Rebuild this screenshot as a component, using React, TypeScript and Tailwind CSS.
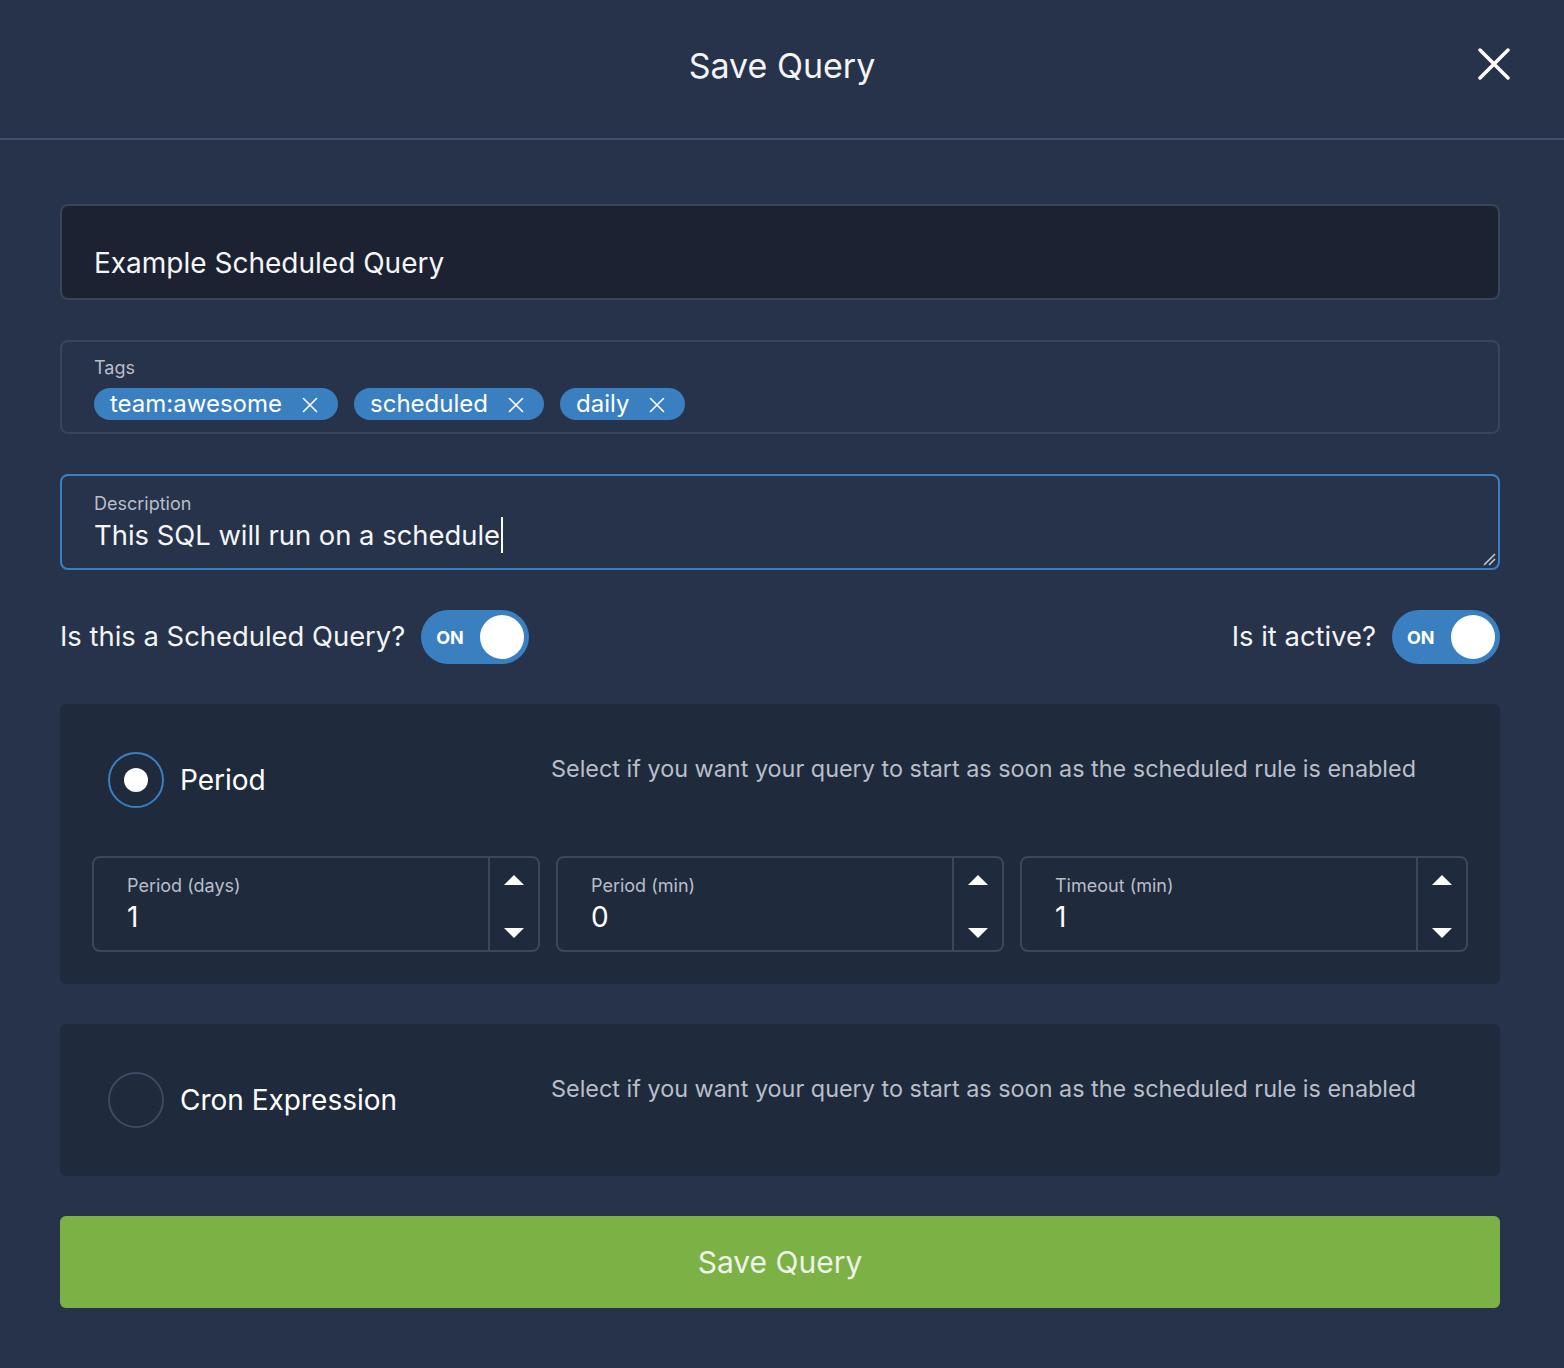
import { X } from 'lucide-react'

const font = { fontFamily: 'Inter, "Noto Sans", sans-serif' }

function Toggle() {
  return (
    <div className="flex h-[54px] w-[108px] items-center justify-between rounded-full bg-[#3a80c1] pl-[15px] pr-[5px]">
      <span className="text-[18px] font-bold text-white">ON</span>
      <span className="h-[44px] w-[44px] rounded-full bg-white" />
    </div>
  )
}

function Radio({ checked }: { checked?: boolean }) {
  return (
    <span
      className={
        checked
          ? 'grid h-[56px] w-[56px] place-items-center rounded-full border-2 border-[#3a80c1]'
          : 'grid h-[56px] w-[56px] place-items-center rounded-full border-2 border-[#3d4a61]'
      }
    >
      {checked && <span className="h-[24px] w-[24px] rounded-full bg-white" />}
    </span>
  )
}

function NumberField({ label, value }: { label: string; value: string }) {
  return (
    <div className="flex h-[96px] rounded-lg border-2 border-[#3b475e]">
      <div className="flex-1 px-[33px] pt-[16px]">
        <div className="text-[18px] leading-[24px] text-[#b9bec8]">{label}</div>
        <div className="mt-[2px] text-[28px] leading-[34px] text-white">{value}</div>
      </div>
      <div className="flex w-[50px] flex-col items-center justify-between border-l-2 border-[#3b475e] pb-[12px] pt-[17px]">
        <svg width="20" height="10" viewBox="0 0 20 10">
          <path d="M0 10 L10 0 L20 10 Z" fill="#fff" />
        </svg>
        <svg width="20" height="10" viewBox="0 0 20 10">
          <path d="M0 0 L10 10 L20 0 Z" fill="#fff" />
        </svg>
      </div>
    </div>
  )
}

function Tag({ label }: { label: string }) {
  return (
    <span className="flex h-[32px] items-center gap-[15px] rounded-full bg-[#3a80c1] pl-[16px] pr-[15px] text-[24px] text-white">
      {label}
      <X size={26} strokeWidth={1.5} className="mt-[2px]" />
    </span>
  )
}

export default function App() {
  const desc = 'Select if you want your query to start as soon as the scheduled rule is enabled'
  return (
    <div style={font} className="min-h-[1368px] bg-[#27334b] text-white">
      <header className="relative flex h-[140px] items-center justify-center border-b-2 border-[#435069] pb-[8px]">
        <h1 className="text-[34px] font-normal text-[#f3f4f6]">Save Query</h1>
        <button className="absolute right-[54px] top-[48px] text-white">
          <svg width="32" height="32" viewBox="0 0 32 32">
            <path d="M2 2 L30 30 M30 2 L2 30" stroke="#fff" strokeWidth="3.5" strokeLinecap="round" />
          </svg>
        </button>
      </header>

      <main className="pl-[60px] pr-[64px] pt-[64px]">
        <div className="flex h-[96px] items-start rounded-lg border-2 border-[#3a4559] bg-[#1c2231] px-[32px] pt-[40px]">
          <span className="text-[28px] leading-[34px] text-[#f5f6f8]">Example Scheduled Query</span>
        </div>

        <div className="mt-[40px] h-[94px] rounded-lg border-2 border-[#3a4559] px-[32px] pt-[14px]">
          <div className="text-[18px] leading-[24px] text-[#b9bec8]">Tags</div>
          <div className="mt-[8px] flex gap-[16px]">
            <Tag label="team:awesome" />
            <Tag label="scheduled" />
            <Tag label="daily" />
          </div>
        </div>

        <div className="relative mt-[40px] h-[96px] rounded-lg border-2 border-[#3a80c1] px-[32px] pt-[16px]">
          <div className="text-[18px] leading-[24px] text-[#b9bec8]">Description</div>
          <div className="mt-[1px] flex items-center text-[27.4px] leading-[36px] text-[#f5f6f8]">
            This SQL will run on a schedule
            <span className="ml-[1px] inline-block h-[36px] w-[2px] bg-white" />
          </div>
          <svg className="absolute bottom-[2px] right-[2px]" width="14" height="14" viewBox="0 0 14 14">
            <path d="M2 13 L13 2 M7 13 L13 7" stroke="#c9ccd2" strokeWidth="1.5" />
          </svg>
        </div>

        <div className="mt-[40px] flex h-[54px] items-center justify-between">
          <div className="flex items-center gap-[16px]">
            <span className="text-[27.4px] text-[#f3f4f6]">Is this a Scheduled Query?</span>
            <Toggle />
          </div>
          <div className="flex items-center gap-[16px]">
            <span className="text-[27.4px] text-[#f3f4f6]">Is it active?</span>
            <Toggle />
          </div>
        </div>

        <section className="mt-[40px] h-[280px] rounded-md bg-[#1f2a3d] px-[32px] pt-[48px]">
          <div className="flex items-start pl-[16px]">
            <div className="flex w-[443px] items-center gap-[16px]">
              <Radio checked />
              <span className="text-[28px] text-white">Period</span>
            </div>
            <p className="mt-[2px] text-[23.4px] leading-[30px] text-[#b9bec8]">{desc}</p>
          </div>
          <div className="mt-[48px] grid grid-cols-3 gap-[16px]">
            <NumberField label="Period (days)" value="1" />
            <NumberField label="Period (min)" value="0" />
            <NumberField label="Timeout (min)" value="1" />
          </div>
        </section>

        <section className="mt-[40px] h-[152px] rounded-md bg-[#1f2a3d] px-[48px] pt-[48px]">
          <div className="flex items-start">
            <div className="flex w-[443px] items-center gap-[16px]">
              <Radio />
              <span className="text-[28px] text-white">Cron Expression</span>
            </div>
            <p className="mt-[2px] text-[23.4px] leading-[30px] text-[#b9bec8]">{desc}</p>
          </div>
        </section>

        <button className="mt-[40px] flex h-[92px] w-full items-center justify-center rounded-md bg-[#7cb146] text-[30px] text-[#eef4e8]">
          Save Query
        </button>
      </main>
    </div>
  )
}
